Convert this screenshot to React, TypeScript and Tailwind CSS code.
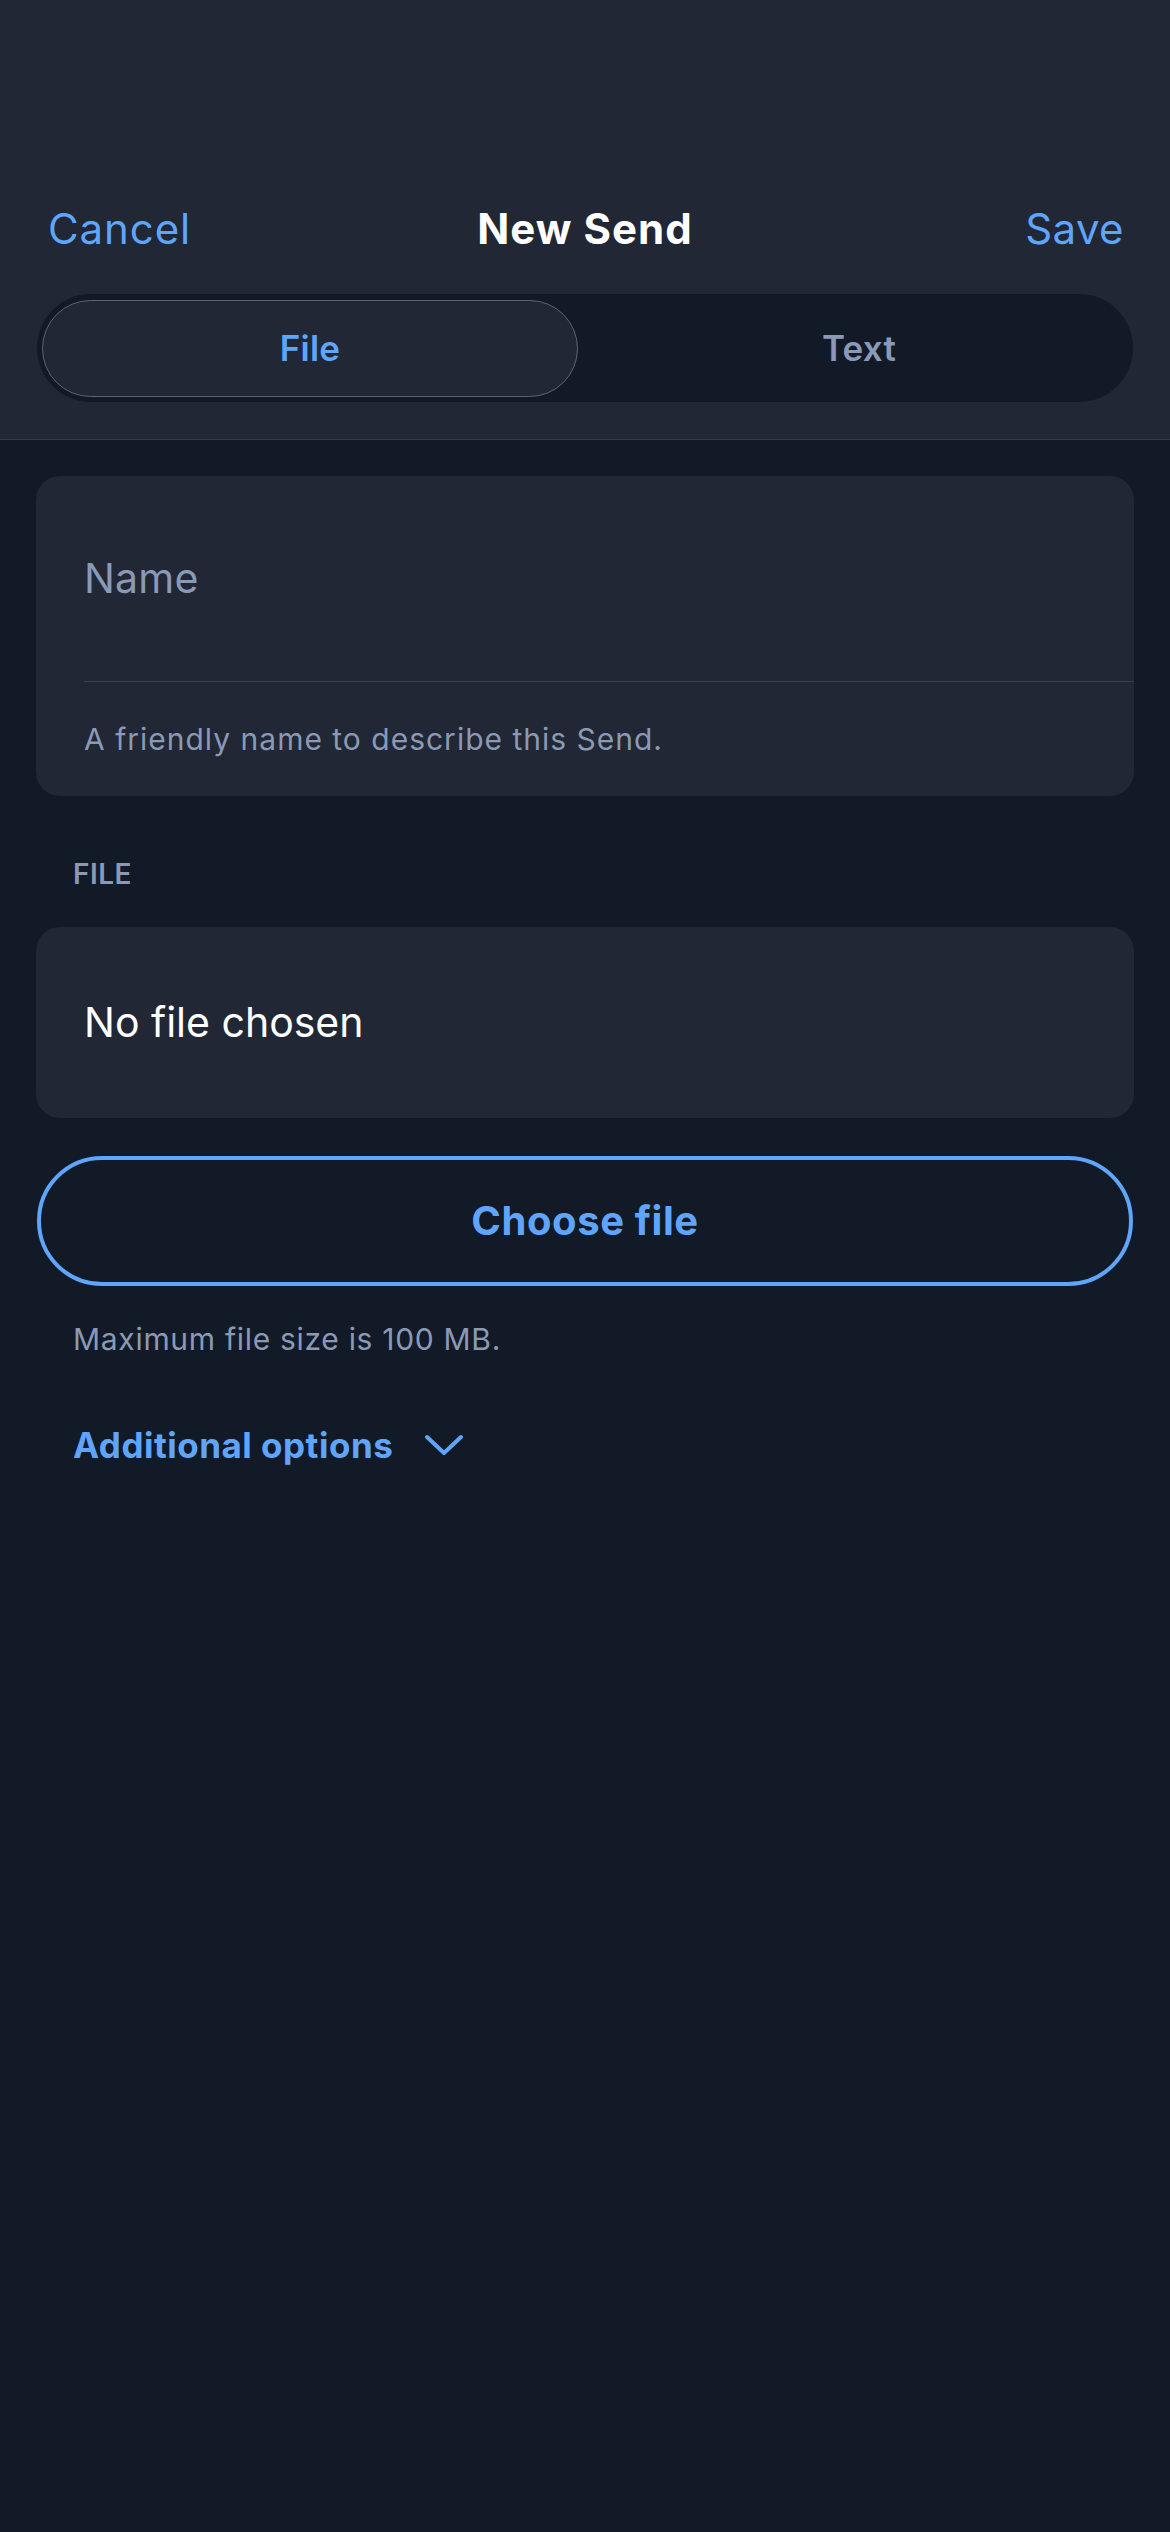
import React from "react";

export default function App() {
  return (
    <div
      className="min-h-[2532px] w-[1170px] bg-[#131a27]"
      style={{ fontFamily: "Inter, 'Noto Sans', sans-serif" }}
    >
      {/* Header */}
      <div className="bg-[#212734] border-b border-[#353b47] pt-[190px] pb-[37px]">
        <div className="relative flex h-[78px] items-center justify-between pl-[48px] pr-[46px]">
          <span className="text-[42px] leading-none text-[#5ea5fb] tracking-[0.9px]">Cancel</span>
          <span className="absolute left-0 right-0 text-center text-[42px] font-bold leading-none text-white tracking-[1px] pointer-events-none">
            New Send
          </span>
          <span className="text-[42px] leading-none text-[#5ea5fb] tracking-[0.4px]">Save</span>
        </div>
        <div className="mx-[37px] mt-[26px] h-[108px] rounded-full bg-[#131a27] flex items-center pl-[5px] pr-[1px]">
          <div className="relative h-[97px] w-[536px] rounded-full border-[1.5px] border-[#5d6370] bg-[#212734] flex items-center justify-center">
            <span className="text-[35px] font-semibold text-[#5ea5fb] tracking-[0.2px]">File</span>
          </div>
          <div className="flex-1 flex items-center justify-center pl-[8px]">
            <span className="text-[35px] font-semibold text-[#8a9ab6] tracking-[0.2px]">Text</span>
          </div>
        </div>
      </div>

      {/* Body */}
      <div className="px-[36px] pt-[36px]">
        <div className="rounded-[24px] bg-[#212734] pl-[48px]">
          <div className="h-[205px] flex items-center">
            <span className="text-[41px] text-[#8a9ab6] tracking-[0.2px]">Name</span>
          </div>
          <div className="h-px bg-[#3a404b]" />
          <div className="h-[114px] flex items-center">
            <span className="text-[30px] text-[#8a9ab6] tracking-[1px]">
              A friendly name to describe this Send.
            </span>
          </div>
        </div>

        <div className="mt-[61px] h-[34px] flex items-center pl-[37px]">
          <span className="text-[28px] font-semibold text-[#8a9ab6] tracking-[0.5px]">FILE</span>
        </div>

        <div className="mt-[36px] h-[191px] rounded-[24px] bg-[#212734] pl-[48px] flex items-center">
          <span className="text-[41px] text-white tracking-[0px]">No file chosen</span>
        </div>

        <div className="mt-[38px] mx-px h-[130px] rounded-full border-[4px] border-[#5ea5fb] flex items-center justify-center">
          <span className="text-[40px] font-bold text-[#5ea5fb] tracking-[0.6px]">Choose file</span>
        </div>

        <div className="mt-[33px] h-[40px] flex items-center pl-[37px]">
          <span className="text-[30px] text-[#8a9ab6] tracking-[0.7px]">Maximum file size is 100 MB.</span>
        </div>

        <div className="mt-[64px] h-[44px] flex items-center pl-[37px] gap-[32px]">
          <span className="text-[35px] font-bold text-[#5ea5fb] tracking-[0.5px]">Additional options</span>
          <svg width="38" height="22" viewBox="0 0 38 22" fill="none">
            <polyline
              points="2,3 19,19 36,3"
              stroke="#5ea5fb"
              strokeWidth="4"
              strokeLinecap="round"
              strokeLinejoin="round"
            />
          </svg>
        </div>
      </div>
    </div>
  );
}
